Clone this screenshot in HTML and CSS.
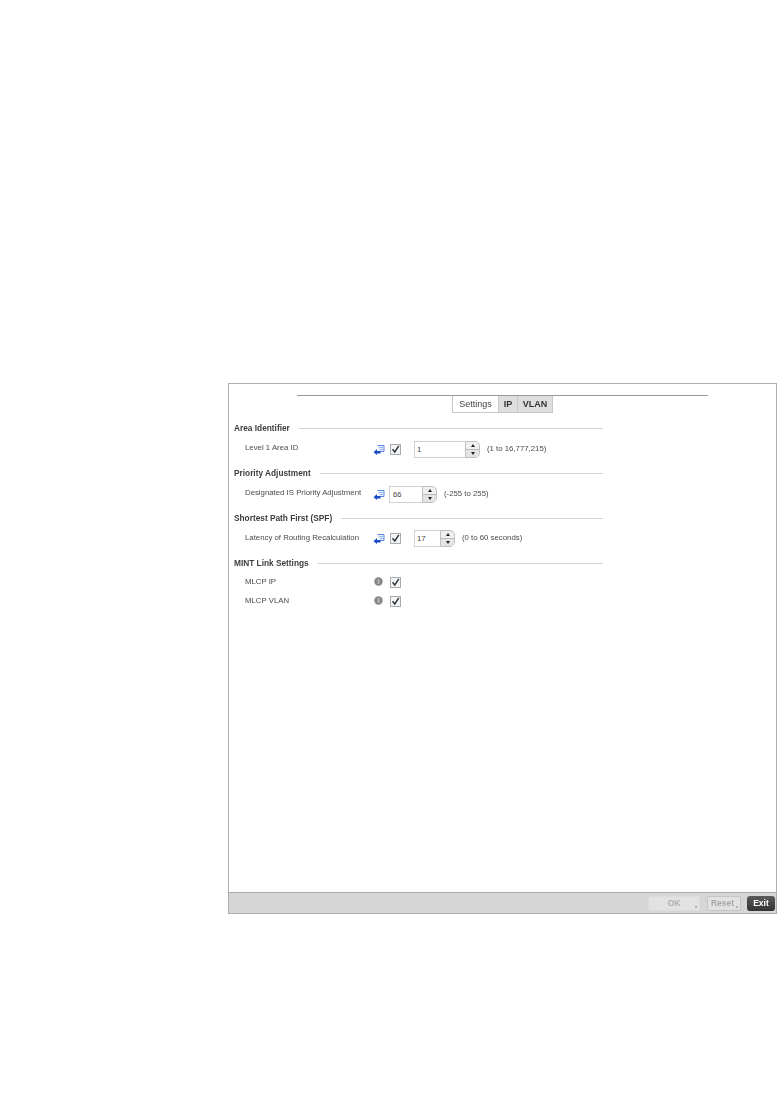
FILE: index.html
```html
<!DOCTYPE html>
<html lang="en">
<head>
<meta charset="utf-8">
<title>Settings</title>
<link rel="stylesheet" href="styles.css">
</head>
<body>
<svg width="0" height="0" class="defs">
  <symbol id="arrow" viewBox="0 0 12 11">
    <path d="M4.5 1.5h6.5v6H6" fill="#e4edfb" stroke="#5f8ade" stroke-width="1"/>
    <path d="M6 3.5h4M7 5.5h3" stroke="#9db9ea" stroke-width="1"/>
    <path d="M0.5 8.2l3.5-3.2v2h3.5v2.4H4V11z" fill="#1a4cc8"/>
  </symbol>
  <symbol id="check" viewBox="0 0 11 11">
    <rect x="0.5" y="0.5" width="10" height="10" fill="#f4f4f4" stroke="#a8acb0"/>
    <path d="M2.5 5.2l2.3 2.8 4-6.2" fill="none" stroke="#2a3240" stroke-width="1.4"/>
  </symbol>
  <symbol id="info" viewBox="0 0 9 9">
    <circle cx="4.5" cy="4.5" r="4.2" fill="#868686"/>
    <rect x="3.7" y="2" width="1.6" height="5" fill="#bdbdbd"/>
  </symbol>
</svg>
<main class="panel">
  <div class="content">
    <div class="tabbar">
      <div class="tabs">
        <span class="tab tab-active">Settings</span>
        <span class="tab">IP</span>
        <span class="tab">VLAN</span>
      </div>
    </div>

    <section class="section s-first">
      <h2 class="heading">Area Identifier</h2>
      <div class="row">
        <span class="label">Level 1 Area ID</span>
        <svg class="ico-arrow"><use href="#arrow"/></svg>
        <svg class="ico-check"><use href="#check"/></svg>
        <span class="spin spin-checked w-area"><span class="val">1</span><span class="arrows"><i class="up"></i><i class="down"></i></span></span>
        <span class="hint">(1 to 16,777,215)</span>
      </div>
    </section>

    <section class="section">
      <h2 class="heading">Priority Adjustment</h2>
      <div class="row">
        <span class="label">Designated IS Priority Adjustment</span>
        <svg class="ico-arrow"><use href="#arrow"/></svg>
        <span class="spin spin-solo w-prio"><span class="val val-small">66</span><span class="arrows"><i class="up"></i><i class="down"></i></span></span>
        <span class="hint">(-255 to 255)</span>
      </div>
    </section>

    <section class="section">
      <h2 class="heading">Shortest Path First (SPF)</h2>
      <div class="row row-tight">
        <span class="label">Latency of Routing Recalculation</span>
        <svg class="ico-arrow"><use href="#arrow"/></svg>
        <svg class="ico-check"><use href="#check"/></svg>
        <span class="spin spin-checked w-spf"><span class="val">17</span><span class="arrows"><i class="up"></i><i class="down"></i></span></span>
        <span class="hint">(0 to 60 seconds)</span>
      </div>
    </section>

    <section class="section s-mint">
      <h2 class="heading">MINT Link Settings</h2>
      <div class="row row-flag">
        <span class="label">MLCP IP</span>
        <svg class="ico-info"><use href="#info"/></svg>
        <svg class="ico-check"><use href="#check"/></svg>
      </div>
      <div class="row row-flag">
        <span class="label">MLCP VLAN</span>
        <svg class="ico-info"><use href="#info"/></svg>
        <svg class="ico-check"><use href="#check"/></svg>
      </div>
    </section>
  </div>
  <footer class="footer">
    <span class="btn btn-ok">OK</span>
    <span class="btn btn-reset">Reset</span>
    <span class="btn btn-exit">Exit</span>
  </footer>
</main>
</body>
</html>
```
FILE: styles.css
```css
* { box-sizing: border-box; }
html, body { margin: 0; padding: 0; background: #fff; }
body {
  padding: 383px 1px 0 228px;
  font-family: "Liberation Sans", Arial, sans-serif;
  font-size: 7.8px;
  color: #4a4a4a;
}
.defs { position: absolute; }
.panel {
  width: 549px;
  height: 531px;
  border: 1px solid #afafaf;
  display: flex;
  flex-direction: column;
  filter: blur(0.35px);
}
.content { flex: 1; padding: 11px 5px 0; }
.tabbar {
  margin-left: 63px;
  width: 411px;
  border-top: 1px solid #999;
  display: flex;
  justify-content: center;
}
.tabs { display: flex; height: 17px; }
.tab {
  display: flex;
  align-items: center;
  justify-content: center;
  background: #dedede;
  border: 1px solid #c8c8c8;
  border-top: 0;
  border-left: 0;
  font-weight: bold;
  font-size: 9px;
  color: #333;
  width: 19px;
}
.tab:last-child { width: 35px; }
.tab-active {
  width: 47px;
  background: #fff;
  font-weight: normal;
  border-left: 1px solid #c8c8c8;
  color: #444;
}
.section { width: 369px; height: 45px; }
.section.s-first { margin-top: 10px; }
.heading {
  margin: 0;
  height: 10px;
  display: flex;
  align-items: center;
  gap: 9px;
  font-size: 8.3px;
  font-weight: bold;
  color: #3c3c3c;
  white-space: nowrap;
}
.heading::after { content: ""; flex: 1; height: 1px; background: #d4d4d4; }
.row {
  display: flex;
  align-items: center;
  height: 17px;
  margin-top: 8px;
  padding-left: 11px;
  white-space: nowrap;
}
.section .row-tight { margin-top: 7px; }
.label { width: 128px; flex: none; position: relative; top: -2px; }
.row-tight .label { top: -1px; }
.ico-arrow { width: 12px; height: 11px; flex: none; margin-right: 5px; }
.ico-check { width: 11px; height: 11px; flex: none; }
.ico-info { width: 9px; height: 9px; flex: none; margin: 0 7px 0 1px; }
.spin { display: flex; height: 17px; flex: none; }
.spin-checked { margin-left: 13px; }
.spin-solo { margin-left: -1px; }
.w-area { width: 66px; }
.w-prio { width: 48px; }
.w-spf { width: 41px; }
.val {
  flex: 1;
  background: #fff;
  border: 1px solid #d0d0d0;
  border-right: 0;
  display: flex;
  align-items: center;
  padding-left: 2px;
  color: #444;
}
.val-small { font-size: 7.5px; padding-left: 3px; }
.arrows {
  width: 15px;
  display: flex;
  flex-direction: column;
  border: 1px solid #c0c0c0;
  border-radius: 0 5px 5px 0;
  background: #f0f0f0;
  overflow: hidden;
}
.arrows i { flex: 1; display: flex; align-items: center; justify-content: center; }
.arrows i.down { border-top: 1px solid #bbb; background: #e4e4e4; }
.arrows i::before {
  content: "";
  border-left: 2.5px solid transparent;
  border-right: 2.5px solid transparent;
}
.arrows i.up::before { border-bottom: 3px solid #222; }
.arrows i.down::before { border-top: 3px solid #222; }
.hint { margin-left: 7px; position: relative; top: -1px; }
.s-mint .row { margin-top: 0; height: 19px; }
.s-mint .heading { margin-bottom: 4px; }
.s-mint .label { top: 0; }
.s-mint .ico-check { position: relative; top: 1px; }
.footer {
  height: 21px;
  flex: none;
  background: #d6d6d6;
  border-top: 1px solid #a9a9a9;
  display: flex;
  align-items: center;
  justify-content: flex-end;
  gap: 6px;
  padding: 0 1px 0 0;
}
.btn {
  position: relative;
  height: 15px;
  display: flex;
  align-items: center;
  justify-content: center;
  border-radius: 2px;
  font-weight: bold;
  font-size: 8.5px;
}
.btn-ok {
  width: 52px;
  margin-right: 1px;
  background: #e2e2e2;
  border: 1px solid #dcdcdc;
  color: #b0b0b0;
}
.btn-reset {
  width: 34px;
  background: #e2e2e2;
  border: 1px solid #c4c4c4;
  color: #a8a8a8;
  padding-right: 3px;
}
.btn-ok::after, .btn-reset::after {
  content: "";
  position: absolute;
  right: 2px;
  bottom: 2px;
  width: 2px;
  height: 2px;
  background: #b0b0b0;
}
.btn-exit {
  width: 28px;
  background: linear-gradient(#5a5a5a, #333);
  color: #fff;
  border-radius: 3px;
}
```
